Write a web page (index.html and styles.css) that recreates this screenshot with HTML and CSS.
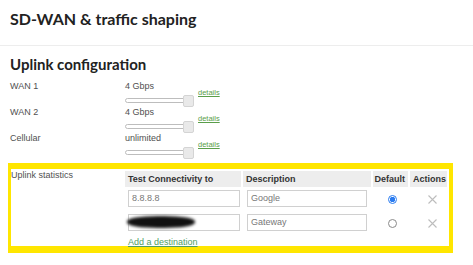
FILE: index.html
```html
<!DOCTYPE html>
<html>
<head>
<meta charset="utf-8">
<link rel="stylesheet" href="styles.css">
</head>
<body>
<header class="page-header">
  <h1 class="page-title">SD-WAN &amp; traffic shaping</h1>
</header>
<section class="section">
  <h2 class="section-title">Uplink configuration</h2>
  <div class="uplink-rows">
    <div class="uplink-row">
      <div class="uplink-label">WAN 1</div>
      <div class="uplink-control">
        <div class="uplink-value">4 Gbps</div>
        <div class="slider"><div class="slider-track"></div><div class="slider-thumb"></div></div>
      </div>
      <a class="details-link" href="#">details</a>
    </div>
    <div class="uplink-row">
      <div class="uplink-label">WAN 2</div>
      <div class="uplink-control">
        <div class="uplink-value">4 Gbps</div>
        <div class="slider"><div class="slider-track"></div><div class="slider-thumb"></div></div>
      </div>
      <a class="details-link" href="#">details</a>
    </div>
    <div class="uplink-row">
      <div class="uplink-label">Cellular</div>
      <div class="uplink-control">
        <div class="uplink-value">unlimited</div>
        <div class="slider"><div class="slider-track"></div><div class="slider-thumb"></div></div>
      </div>
      <a class="details-link" href="#">details</a>
    </div>
  </div>
</section>
<div class="highlight-box">
  <div class="stats-label">Uplink statistics</div>
  <table class="stats-table">
    <thead>
      <tr>
        <th class="col-target">Test Connectivity to</th>
        <th class="col-desc">Description</th>
        <th class="col-default">Default</th>
        <th class="col-actions">Actions</th>
      </tr>
    </thead>
    <tbody>
      <tr>
        <td class="cell-target"><div class="text-input">8.8.8.8</div></td>
        <td class="cell-desc"><div class="text-input desc-input">Google</div></td>
        <td class="cell-default"><span class="radio radio-checked"></span></td>
        <td class="cell-actions"><svg class="remove-icon" width="9" height="9" viewBox="0 0 9 9"><path d="M0.5 0.5L8.5 8.5M8.5 0.5L0.5 8.5" stroke="#bdbdbd" stroke-width="1.1" fill="none"/></svg></td>
      </tr>
      <tr>
        <td class="cell-target cell-redacted"><div class="text-input"></div><span class="redaction"></span></td>
        <td class="cell-desc"><div class="text-input desc-input">Gateway</div></td>
        <td class="cell-default"><span class="radio"></span></td>
        <td class="cell-actions"><svg class="remove-icon" width="9" height="9" viewBox="0 0 9 9"><path d="M0.5 0.5L8.5 8.5M8.5 0.5L0.5 8.5" stroke="#bdbdbd" stroke-width="1.1" fill="none"/></svg></td>
      </tr>
      <tr>
        <td class="cell-add" colspan="4"><a class="add-link" href="#">Add a destination</a></td>
      </tr>
    </tbody>
  </table>
</div>
</body>
</html>
```
FILE: styles.css
```css
* { box-sizing: border-box; }
html, body { margin: 0; padding: 0; background: #fff; }
body { font-family: "Liberation Sans", Arial, sans-serif; color: #444; width: 473px; }

.page-header {
  height: 46px;
  border-bottom: 1px solid #ededed;
  padding: 9px 0 0 10px;
}
.page-title {
  margin: 0;
  font-family: Lato, "Noto Sans", sans-serif;
  font-weight: 700;
  font-size: 16px;
  line-height: 20px;
  color: #222;
}

.section { padding: 8px 0 0 10px; }
.section-title {
  margin: 0;
  font-family: Lato, "Noto Sans", sans-serif;
  font-weight: 700;
  font-size: 15px;
  line-height: 20px;
  color: #222;
}

.uplink-rows { margin-top: 7px; display: flex; flex-direction: column; }
.uplink-row {
  display: grid;
  grid-template-columns: 115px 73px auto;
  height: 26px;
}
.uplink-label, .uplink-value {
  font-size: 9px;
  line-height: 10px;
  color: #505050;
}
.uplink-control { display: flex; flex-direction: column; gap: 4px; }
.slider { position: relative; width: 69px; height: 12px; }
.slider-track {
  position: absolute; left: 0; top: 3px;
  width: 64px; height: 5px;
  border: 1px solid #bdbdbd; border-radius: 3px; background: #fff;
}
.slider-thumb {
  position: absolute; right: 0; top: 0;
  width: 11px; height: 12px;
  border: 1px solid #d4d4d4; border-radius: 2px; background: #e9e9e9;
}
.details-link {
  margin-top: 7px;
  font-size: 7.5px;
  line-height: 9px;
  color: #5a9e4a;
  text-decoration: underline;
  align-self: start;
  justify-self: start;
}

.highlight-box {
  margin: 4px 0 0 8px;
  width: 445px;
  height: 90px;
  border-style: solid;
  border-color: #ffe600;
  border-width: 6px 4px 7px 3px;
  display: grid;
  grid-template-columns: 112px auto;
  align-items: start;
}
.stats-label {
  padding-top: 1px;
  font-size: 9px;
  line-height: 10px;
  color: #505050;
}
.stats-table {
  border-collapse: separate;
  border-spacing: 2px;
  margin-top: 0;
  table-layout: fixed;
}
.stats-table th {
  background: #ededed;
  height: 16px;
  padding: 0 0 0 3px;
  font-size: 9px;
  font-weight: 700;
  color: #333;
  text-align: left;
  vertical-align: middle;
}
.col-target { width: 116px; }
.col-desc { width: 129px; }
.col-default { width: 35px; }
.stats-table th.col-default { padding-left: 1px; }
.col-actions { width: 37px; }
.stats-table th.col-actions { padding-left: 3px; }

.stats-table td { padding: 1px 0 3px 3px; vertical-align: top; height: 21px; }
.text-input {
  width: 112px;
  height: 17px;
  border: 1px solid #d0d0d0;
  background: #fff;
  padding-left: 3px;
  font-size: 9px;
  line-height: 15px;
  color: #777;
}
.desc-input { width: 120px; margin-left: 1px; }
.cell-default { text-align: center; }
.cell-default .radio { margin-top: 3px; }
.radio {
  display: inline-block;
  width: 9px; height: 9px;
  border-radius: 50%;
  border: 1px solid #8a8a8a;
  background: #fff;
}
.radio-checked {
  border: 1px solid #2b7cf0;
  background: radial-gradient(circle, #2b7cf0 0 2.5px, #fff 3px);
}
.stats-table td.cell-actions { padding-left: 18px; }
.remove-icon { display: block; margin-top: 5px; }

.cell-redacted { position: relative; }
.redaction {
  position: absolute;
  left: 2px; top: 3px;
  width: 68px; height: 12px;
  background: #111;
  border-radius: 45%;
  filter: blur(1.5px);
}

.stats-table td.cell-add { height: 10px; padding: 0 0 0 3px; }
.add-link {
  display: block;
  font-size: 9px;
  line-height: 10px;
  color: #4f9e5f;
  text-decoration: underline;
}
```
